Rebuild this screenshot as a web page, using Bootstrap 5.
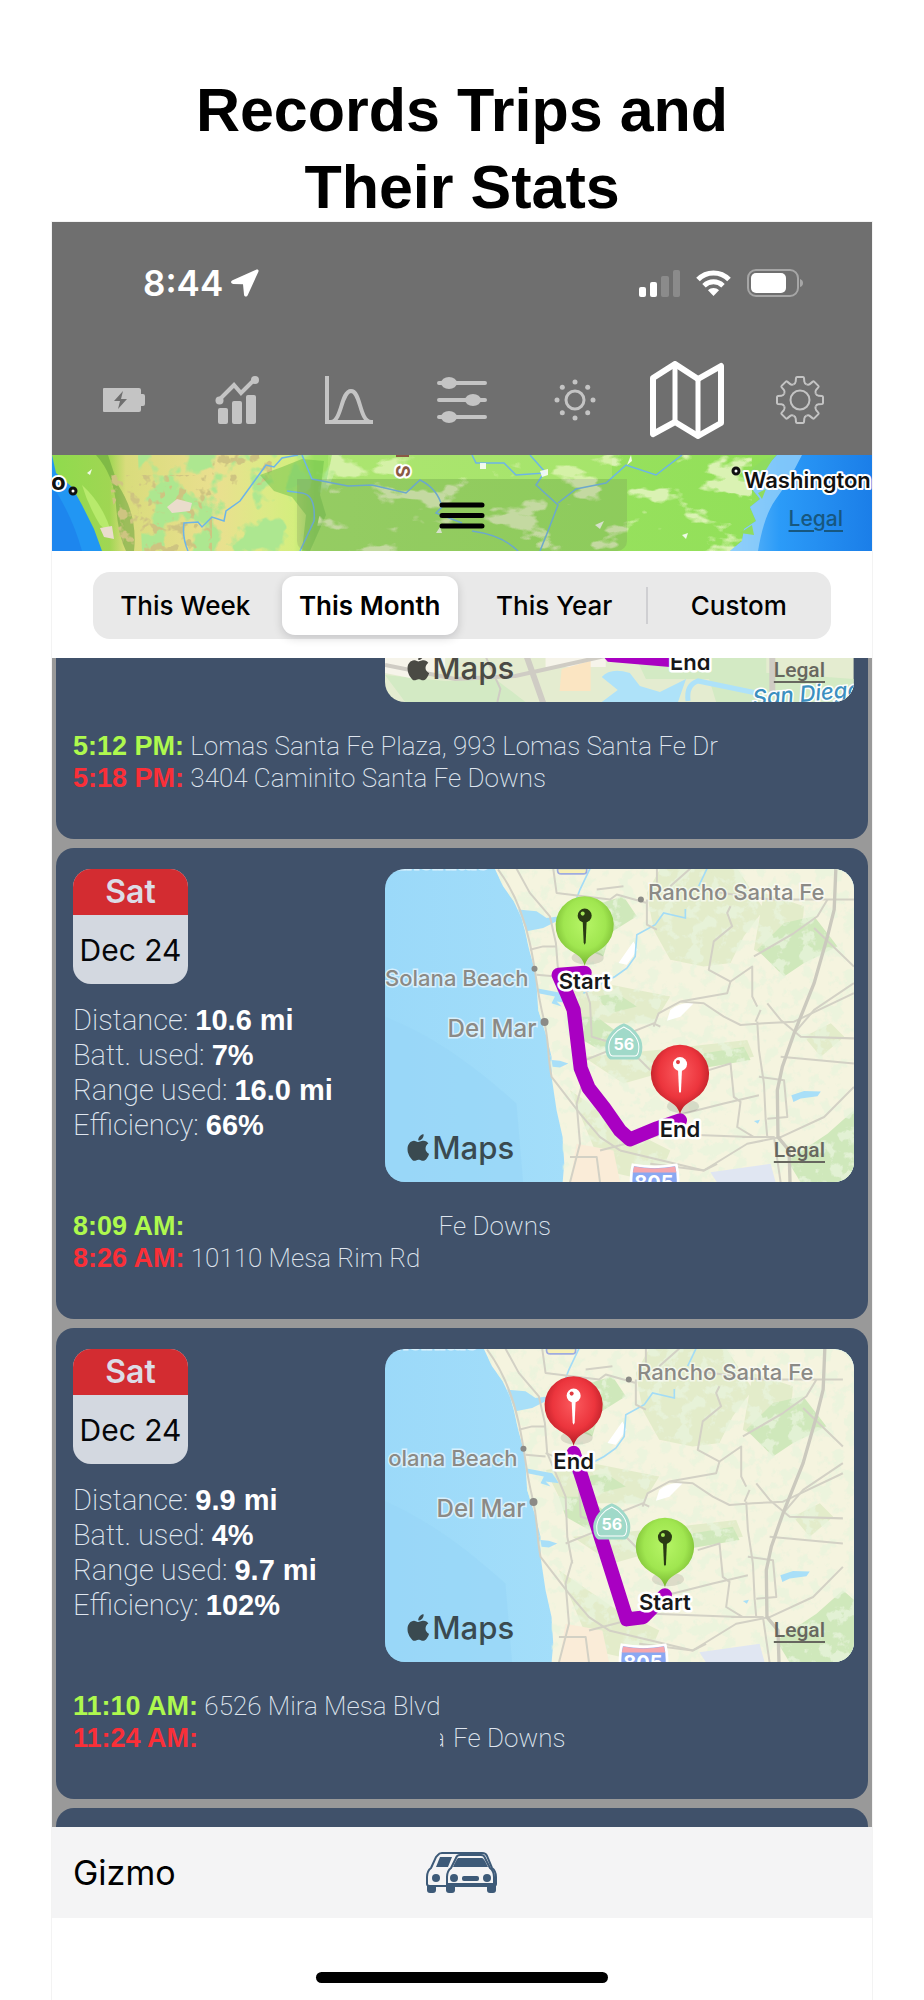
<!DOCTYPE html>
<html lang="en">
<head>
<meta charset="utf-8">
<meta name="viewport" content="width=device-width, initial-scale=1">
<title>Records Trips and Their Stats</title>
<link href="https://cdn.jsdelivr.net/npm/bootstrap@5.3.0/dist/css/bootstrap.min.css" rel="stylesheet">
<style>
  body { background: #fff; color: #000; font-family: "Liberation Sans", sans-serif; }
  .headline { font-size: 61px; line-height: 77px; padding-top: 72px; margin-bottom: -4px; }
  .phone { margin: 0 52px; box-shadow: 0 0 0 1px #f3f3f3; font-family: Inter, sans-serif; }
  .topbar { background: #6f6f6f; }
  .statusbar { height: 122px; padding: 0 68px 0 91px; color: #fff; font-size: 35px; font-weight: 600; }
  .tabs { height: 111px; padding: 0 16px; color: #c4c4c4; }
  .tabs a { color: inherit; }
  .tabs a.active { color: #fff; }
  .usmap { height: 96px; background: #93e25c; }
  .usmap svg.terrain { width: 100%; height: 96px; }
  .grip { width: 330px; height: 72px; border-radius: 0 0 10px 10px; background: rgba(110,120,90,.2); }
  .legal { font-size: 21px; line-height: 24px; font-weight: 500; right: 29px; bottom: 20px; color: #67675f; text-decoration-thickness: 2px; text-underline-offset: 4px; }
  .legal:hover { color: #333; }
  .usmap .legal { color: #17577f; }
  .rangebar { padding: 21px 41px 19px; }
  .segment { background: #e9e9e9; border-radius: 17px; padding: 4px 0; height: 67px; }
  .segment .btn { border: 0; border-radius: 13px !important; font-size: 26px; line-height: 32px; font-weight: 500; color: #000; padding: 14px 0 12px; margin: 0 4px !important; flex: 1 1 0; white-space: nowrap; }
  .segment .btn-check:checked + .btn { background: #fff; color: #000; font-weight: 600; box-shadow: 0 3px 10px rgba(0,0,20,.16); }
  .divide { width: 2px; margin: 11px -1px; background: #cfcfd2; }
  .trips { background: #999; padding: 0 4px; gap: 9px; }
  .trip { background: #40516a; border-radius: 18px; padding: 21px 14px 45px 17px; color: #dfe5ee; font-family: Roboto, sans-serif; font-weight: 200; }
  .trip-first { border-radius: 0 0 18px 18px; padding-top: 0; }
  .trip-next { border-radius: 18px 18px 0 0; height: 19px; padding: 0; }
  .cal { width: 115px; height: 115px; border-radius: 18px; background: #d3d8e0; color: #06070a; font-family: Inter, sans-serif; font-size: 30px; font-weight: 400; }
  .cal-day { background: #d32c31; color: #dcdce6; height: 46px; line-height: 46px; font-weight: 600; font-size: 32px; }
  .cal-date { line-height: 70px; white-space: nowrap; }
  .stats { font-size: 29px; line-height: 35px; margin-top: 19px; }
  .stats strong, .when { font-family: "Liberation Sans", sans-serif; font-weight: 700; }
  .stats strong { color: #fff; }
  .trip-map { width: 60%; border-radius: 20px; height: 313px; }
  .trip-first .trip-map { height: 44px; border-radius: 0 0 20px 20px; }
  .trip-map svg { width: 100%; height: 100%; }
  .places { font-size: 26px; line-height: 32px; margin-top: 28px; }
  .when { font-size: 27px; }
  .when-start { color: #aef94e; }
  .when-end { color: #fa2f38; }
  .hide-a { margin-left: 254px; }
  .hide-b { margin-left: 242px; width: 5px; direction: rtl; }
  .town { font-size: 22px; font-weight: 500; fill: #8b8a86; stroke: #fff; stroke-opacity: .6; stroke-width: 3px; paint-order: stroke; }
  .town-lg { font-size: 24px; }
  .pinname { font-size: 22px; font-weight: 600; fill: #17181a; stroke: #fff; stroke-width: 5px; stroke-linejoin: round; paint-order: stroke; }
  .brand { font-size: 31px; font-weight: 500; }
  .route { fill: none; stroke: #a900c2; stroke-width: 14px; stroke-linejoin: round; stroke-linecap: round; }
  .footbar { background: #f4f4f5; height: 91px; padding: 0 21px; font-size: 34px; font-weight: 400; }
  .home { height: 82px; padding-top: 54px; }
  .home span { width: 292px; height: 11px; border-radius: 6px; background: #000; }
  .trip-map text, .usmap text { font-family: Inter, sans-serif; }
</style>
</head>
<body>

<svg width="0" height="0" class="position-absolute" aria-hidden="true">
  <defs>
    <linearGradient id="sea" x1="0" x2="1"><stop offset="0" stop-color="#9bd9f9"/><stop offset="1" stop-color="#b1e6fb"/></linearGradient>
    <radialGradient id="pg" cx=".5" cy=".4" r=".6"><stop offset="0" stop-color="#b6f566"/><stop offset=".6" stop-color="#a0e650"/><stop offset="1" stop-color="#74b32e"/></radialGradient>
    <radialGradient id="pr" cx=".5" cy=".4" r=".6"><stop offset="0" stop-color="#fb5a5e"/><stop offset=".6" stop-color="#ec353d"/><stop offset="1" stop-color="#b01a23"/></radialGradient>
    <filter id="mottle" x="0" y="0" width="100%" height="100%">
      <feTurbulence type="fractalNoise" baseFrequency=".024" numOctaves="4" seed="8"/>
      <feColorMatrix values="0 0 0 0 .81  0 0 0 0 .9  0 0 0 0 .72  9 0 0 0 -4.6"/>
      <feComposite in2="SourceGraphic" operator="in"/>
    </filter>
    <filter id="hills" x="0" y="0" width="100%" height="100%">
      <feTurbulence type="fractalNoise" baseFrequency=".03" numOctaves="4" seed="3"/>
      <feColorMatrix values="0 0 0 0 .42  0 0 0 0 .8  0 0 0 0 .28  12 0 0 0 -6"/>
      <feComposite in2="SourceGraphic" operator="in"/>
    </filter>
    <filter id="rocks" x="0" y="0" width="100%" height="100%">
      <feTurbulence type="fractalNoise" baseFrequency=".09" numOctaves="3" seed="5"/>
      <feColorMatrix values="0 0 0 0 .62  0 0 0 0 .55  0 0 0 0 .22  9 0 0 0 -5"/>
      <feComposite in2="SourceGraphic" operator="in"/>
    </filter>
    <filter id="plains" x="0" y="0" width="100%" height="100%">
      <feTurbulence type="fractalNoise" baseFrequency=".02 .04" numOctaves="4" seed="12"/>
      <feColorMatrix values="0 0 0 0 .7  0 0 0 0 .89  0 0 0 0 .45  12 0 0 0 -7"/>
      <feComposite in2="SourceGraphic" operator="in"/>
    </filter>

    <!-- San Diego north county terrain, drawn at three units per pixel -->
    <g id="coast">
      <rect x="47" y="57" width="1460" height="939" fill="url(#sea)"/>
      <path d="M47 500C200 560 330 660 440 760L460 996H47Z" fill="#97d5f7" opacity=".6"/>
      <path d="M375 57L400 110 432 155 455 205 466 245 478 300 498 372 505 480 530 560 545 620 545 680 560 780 578 860 583 940 578 996H1507V57Z" fill="#f5f4df"/>
      <path d="M870 57H1100L1180 180 1120 260 1080 340 1000 350 900 330 850 240 830 130ZM1180 130L1300 170 1290 280 1200 330 1150 300ZM560 420L700 400 900 440 850 520 720 520 600 500ZM640 620L860 600 1130 570 1150 620 900 660 760 700ZM600 720L760 830 900 900 860 996 700 960ZM1300 560L1380 520 1420 560 1350 620Z" fill="#e3ecca"/>
      <path d="M660 170L760 140 800 200 720 250 700 320 650 300ZM1160 300L1240 220 1330 200 1400 290 1300 340 1240 380ZM680 440L740 430 800 470 720 490ZM600 500L680 500 760 560 690 600 620 560ZM940 620L1120 590 1140 630 960 660ZM1250 930L1370 850 1449 780 1507 830V996H1290Z" fill="#cfe8bb"/>
      <path d="M375 57L400 110 432 155 455 205 466 245 478 300 498 372 505 480 530 560 545 680 578 860 578 996H1507V57Z" filter="url(#mottle)" opacity=".75"/>
      <path d="M620 880L730 900 750 996H600Z" fill="#faecd8"/>
      <path d="M900 480Q930 455 970 460L930 500 890 512ZM745 340L790 275 802 300 770 345Z" fill="#fff"/>
      <path d="M1020 965L1200 940 1215 996H1040Z" fill="#e0e6f2"/>
      <g fill="#a8dff8">
        <path d="M445 180L500 185 530 205 570 200 560 215 520 235 470 245ZM545 630L570 632 595 640 570 652 548 650ZM1262 735L1300 722 1350 724 1340 738 1290 745 1268 755ZM1150 812L1168 808 1162 820ZM500 415L580 430 600 460 560 455 575 470 545 460 555 440 505 430Z"/>
      </g>
      <g fill="none" stroke="#a3dcf6" stroke-width="5"><path d="M1010 57L985 110M945 178L945 205 880 190 855 225 800 255 795 320 770 355 735 380 640 430M660 57L630 120 600 200"/></g>
      <g fill="none" stroke="#d3d1c5" stroke-width="6" stroke-linejoin="round">
        <path d="M385 60C430 120 460 190 480 280S500 420 520 500 530 600 545 680L630 790 690 860 750 900M440 57L480 130 540 200 558 280 565 370 620 500 625 620 640 700"/>
        <path d="M550 57L560 130 720 150 740 135 830 160M680 120L760 110M1080 170L1070 190 1085 230 1030 275 1015 360 1080 395 1145 350V440L1160 470M830 150V225L860 240M860 57V100M960 57L900 110M1020 125L1200 150 1449 150"/>
        <path d="M850 530L865 490 930 455 1000 460 1060 500 1110 525 1180 520 1270 515 1449 430M750 560L850 520 870 530M1080 395L1070 430 930 455M1160 515L1165 600 1180 700 1185 805 1190 860M1170 480L1155 515M1190 460L1230 510 1290 560 1449 565"/>
        <path d="M620 640L720 600 800 620 840 660M1015 660L1080 640 1090 740 1110 755 1100 830 1150 860M900 800L1060 760 1165 735M1165 680L1240 690 1250 800 1190 805M1230 620L1449 640M640 690L620 760 630 880 600 996M750 900L1000 960 1130 880 1230 860 1360 800 1449 710M690 900L880 850 1140 860M1115 860L1210 860 1230 996M1150 320L1270 250 1340 200 1370 150M1330 235L1449 350M1270 550L1330 480 1449 400"/>
        <path d="M560 370L640 400 660 460 665 560 800 600M480 300L520 290 560 290M500 375L560 380M600 920L680 920 690 996M840 940L1000 960 1040 940"/>
      </g>
      <g fill="none" stroke="#cbc9be" stroke-width="10"><path d="M1395 57L1390 180 1370 260 1330 400 1270 550 1235 650 1220 720 1222 860 1255 900 1258 996"/></g>
      <path d="M563 57H650V62Q650 73 640 73H574Q563 73 563 62Z" fill="#f6efb4" stroke="#9fabdf" stroke-width="5"/>
      <path d="M788 943Q852 955 918 943 926 975 922 1010H784Q780 975 788 943Z" fill="#8aa8f2" stroke="#fff" stroke-width="8"/>
      <path d="M792 948Q852 960 914 948L918 966H788Z" fill="#f5a7ae"/>
    </g>

    <g id="needle"><circle cx="0" cy="-10" r="7"/><path d="M-2 -5H2L1 17 0 19-1 17Z"/></g>
    <path id="balloon" d="M0 40C-2 32-7 29-14 25A29 29 0 1 1 14 25C7 29 2 32 0 40Z"/>
    <g id="pin-start"><ellipse cx="3" cy="32" rx="16" ry="7" fill="#000" opacity=".1"/><use href="#balloon" fill="url(#pg)"/><use href="#needle" fill="#2a3a14"/><circle cx="-2" cy="-12" r="2" fill="#a8e85a"/></g>
    <g id="pin-end"><ellipse cx="3" cy="32" rx="16" ry="7" fill="#000" opacity=".1"/><use href="#balloon" fill="url(#pr)"/><use href="#needle" fill="#fff"/><circle cx="-2" cy="-12" r="2" fill="#e03a40"/></g>
    <path id="sr" d="M0-18C8-15 17-6 17 4 17 10 15 15 12 15H-12C-15 15-17 10-17 4-17-6-8-15 0-18Z" fill="#a0d9c9" stroke="#a0d9c9" stroke-width="3"/>
    <path id="sr-line" d="M0-16C7-13 15-5 15 4 15 9 14 13 11 13H-11C-14 13-15 9-15 4-15-5-7-13 0-16Z" fill="none" stroke="#fff" stroke-width="1"/>
    <path id="apple" d="M11.182.008C11.148-.03 9.923.023 8.857 1.18c-1.066 1.156-.902 2.482-.878 2.516.024.034 1.52.087 2.475-1.258.955-1.345.762-2.391.728-2.43Zm3.314 11.733c-.048-.096-2.325-1.234-2.113-3.422.212-2.189 1.675-2.789 1.698-2.854.023-.065-.597-.79-1.254-1.157a3.692 3.692 0 0 0-1.563-.434c-.108-.003-.483-.095-1.254.116-.508.139-1.653.589-1.968.607-.316.018-1.256-.522-2.267-.665-.647-.125-1.333.131-1.824.328-.49.196-1.422.754-2.074 2.237-.652 1.482-.311 3.83-.067 4.56.244.729.625 1.924 1.273 2.796.576.984 1.34 1.667 1.659 1.899.319.232 1.219.386 1.843.067.502-.308 1.408-.485 1.766-.472.357.013 1.061.154 1.782.539.571.197 1.111.115 1.652-.105.541-.221 1.324-1.059 2.238-2.758.347-.79.505-1.217.473-1.282Z"/>
    <path id="tooth" d="M-6.5-15.7Q-4.5-16.5-4.3-18.5L-4-22Q-3.8-23-3-23H3Q3.8-23 4-22L4.3-18.5Q4.5-16.5 6.5-15.7"/>
  </defs>
</svg>

<h1 class="headline fw-bold text-center">Records Trips and<br>Their Stats</h1>

<main class="phone">
  <header class="topbar">
    <div class="statusbar d-flex align-items-center">
      <span>8:44</span>
      <svg class="ms-2" width="28" height="28" viewBox="0 0 28 28" fill="#fff"><path d="M25.5.6 1.5 11.2C-.7 12.2-.2 14.8 2 14.9L12 15.2 13 25.5C13.2 28 15.8 28.2 16.8 26L27.4 2.7C28 1.2 27 0 25.5.6Z"/></svg>
      <svg class="ms-auto" width="41" height="27" viewBox="0 0 41 27" fill="#fff"><rect y="17" width="7" height="10" rx="2"/><rect x="11" y="12" width="7" height="15" rx="2"/><rect x="22" y="6" width="8" height="21" rx="2" opacity=".2"/><rect x="34" width="7" height="27" rx="2" opacity=".2"/></svg>
      <svg class="mx-3" width="35" height="26" viewBox="0 0 35 26" fill="none" stroke="#fff" stroke-width="5"><path d="M2 9.5C10.5.7 24.5.7 33 9.5"/><path d="M8 15.7C13.5 10.5 21.5 10.5 27 15.7"/><path d="M17.5 26 12 20.2C15 17.3 20 17.3 23 20.2Z" fill="#fff" stroke="none"/></svg>
      <svg width="57" height="28" viewBox="0 0 57 28"><rect x="1" y="1" width="50" height="26" rx="8" fill="none" stroke="#a6a6a6" stroke-width="2"/><rect x="4" y="4" width="35" height="20" rx="5" fill="#fff"/><path d="M53 10Q56 11 56 14T53 18Z" fill="#a6a6a6"/></svg>
    </div>
    <nav class="tabs row row-cols-7 g-0 align-items-center text-center flex-nowrap" aria-label="Sections">
      <a class="col" href="#battery" aria-label="Battery"><svg width="48" height="48" viewBox="0 0 48 48" fill="currentColor"><path d="M4 12H39Q41 12 41 14V18H43Q45 18 45 20V28Q45 30 43 30H41V34Q41 36 39 36H4Q3 36 3 35V13Q3 12 4 12ZM23 15 14 25H20L18 33 27 23H21Z" fill-rule="evenodd"/></svg></a>
      <a class="col" href="#charts" aria-label="Charts"><svg width="48" height="48" viewBox="0 0 48 48" fill="currentColor"><rect x="5" y="32" width="10" height="16" rx="2"/><rect x="19" y="25" width="10" height="23" rx="2"/><rect x="33" y="19" width="10" height="29" rx="2"/><path d="M6 24 21 9 28 17 41 4" fill="none" stroke="currentColor" stroke-width="4"/><circle cx="6.5" cy="24.5" r="4"/><circle cx="42" cy="4" r="4"/></svg></a>
      <a class="col" href="#curve" aria-label="Distribution"><svg width="48" height="48" viewBox="0 0 48 48" fill="none" stroke="currentColor" stroke-width="4"><path d="M2 0V46H48M6 46C17 45 16 15 26 15S34 45 46 46"/></svg></a>
      <a class="col" href="#filters" aria-label="Filters"><svg width="50" height="48" viewBox="0 0 50 48" fill="currentColor"><path d="M2 7H48M2 24H48M2 41H48" stroke="currentColor" stroke-width="4" stroke-linecap="round"/><ellipse cx="12" cy="7" rx="8" ry="6"/><ellipse cx="36" cy="24" rx="8" ry="6"/><ellipse cx="12" cy="41" rx="8" ry="6"/></svg></a>
      <a class="col" href="#climate" aria-label="Climate"><svg width="48" height="48" viewBox="0 0 48 48" fill="currentColor"><circle cx="24" cy="24" r="9" fill="none" stroke="currentColor" stroke-width="3"/><circle cx="24" cy="6" r="2.5"/><circle cx="24" cy="42" r="2.5"/><circle cx="6" cy="24" r="2.5"/><circle cx="42" cy="24" r="2.5"/><circle cx="11.3" cy="11.3" r="2.5"/><circle cx="36.7" cy="11.3" r="2.5"/><circle cx="11.3" cy="36.7" r="2.5"/><circle cx="36.7" cy="36.7" r="2.5"/></svg></a>
      <a class="col active" href="#trips" aria-label="Trips" aria-current="page"><svg width="74" height="78" viewBox="0 0 74 78" fill="none" stroke="currentColor" stroke-linejoin="round" stroke-linecap="round"><path d="M3 17 25 3 48 18 71 5V62L48 75 25 61 3 73Z" stroke-width="6"/><path d="M25 3V61M48 18V75" stroke-width="5"/></svg></a>
      <a class="col" href="#settings" aria-label="Settings"><svg width="48" height="48" viewBox="-24 -24 48 48" fill="none" stroke="currentColor" stroke-width="2"><circle r="9.5"/><use href="#tooth"/><use href="#tooth" transform="rotate(45)"/><use href="#tooth" transform="rotate(90)"/><use href="#tooth" transform="rotate(135)"/><use href="#tooth" transform="rotate(180)"/><use href="#tooth" transform="rotate(225)"/><use href="#tooth" transform="rotate(270)"/><use href="#tooth" transform="rotate(315)"/></svg></a>
    </nav>
  </header>

  <section class="usmap position-relative overflow-hidden d-flex justify-content-center align-items-end">
    <svg class="terrain position-absolute top-0 start-0" viewBox="0 0 820 96" preserveAspectRatio="xMidYMid slice">
      <defs>
        <linearGradient id="atl" x1="0" x2="1"><stop offset="0" stop-color="#6fbef8"/><stop offset=".35" stop-color="#2b9bf8"/><stop offset="1" stop-color="#1b7ee8"/></linearGradient>
        <linearGradient id="mix"><stop offset="0" stop-color="#8fdb4d"/><stop offset=".07" stop-color="#a0d653"/><stop offset=".09" stop-color="#d9dc7c"/><stop offset=".2" stop-color="#eadf8f"/><stop offset=".26" stop-color="#dcea86"/><stop offset=".295" stop-color="#d4ee7e"/><stop offset=".32" stop-color="#9fe165"/><stop offset="1" stop-color="#8fe056"/></linearGradient>
      </defs>
      <rect width="820" height="96" fill="url(#mix)"/>
      <path d="M86 0H290L250 96H90Z" filter="url(#hills)"/>
      <path d="M44 0Q62 20 64 50T74 96H82Q86 60 66 30L56 0Z" fill="#5f9d3a" opacity=".5"/>
      <path d="M56 20H160V96H70ZM160 0H220V30H160Z" filter="url(#rocks)"/>
      <path d="M30 30Q52 50 60 80L48 70Q36 50 30 30Z" fill="#b8ea6c"/>
      <path d="M208 20 230 12 250 4 272 6 268 40 274 60 258 96H250L254 60 240 42 222 36Z" fill="#6cc048" opacity=".5"/>
      <path d="M280 0H700V96H260Z" filter="url(#plains)"/>
      <path d="M276 0H560V24H276Z" fill="#c9f08c" opacity=".3"/>
      <path d="M115 52 125 44 140 48 138 56 120 58ZM48 73 60 71 62 84 52 82Z" fill="#eadccc"/>
      <g fill="none" stroke="#6cb4e8" stroke-width="1.5"><path d="M136 96Q130 82 132 68L146 67 150 72 160 62 172 66 174 56 188 46 214 10 222 12 230 3 246 0M250 0 260 24 296 31 320 30 354 38 368 25Q386 34 390 52L384 58 410 68M248 96 262 66Q264 40 250 38L235 36M420 0 424 8 452 8 464 20 492 18 484 30 506 50 496 76 488 96M478 0 494 18M506 48 524 34 554 28 574 10 604 20 630 0M420 76Q450 80 466 96"/></g>
      <g fill="#fff" opacity=".85"><path d="M428 8H434V14H428ZM488 16 496 14 496 20 490 22ZM543 70 552 66 548 74ZM630 80 636 78 634 84ZM575 10 579 0 580 6ZM384 78 388 72 390 78ZM35 18 40 14 38 20Z"/></g>
      <path d="M0 0 4 18 20 32 30 50 42 74 50 96H0Z" fill="#2196f3"/>
      <path d="M0 30Q20 60 30 96H0Z" fill="#1d86ee"/>
      <path d="M725 0 712 14 702 12 700 34 708 44 698 52 704 66 692 74 690 86 678 96H820V0Z" fill="url(#atl)"/>
      <path d="M725 0 712 14 702 12 700 34 708 44 698 52 704 66 692 74 690 86 678 96H706Q712 60 724 44T750 0Z" fill="#9bd4fb" opacity=".75"/>
      <path d="M700 14 712 4 722 2 712 18ZM706 38 714 34 710 44ZM688 78 700 70 702 80Z" fill="#8fdc60"/>
      <g stroke="#fff" stroke-width="4" paint-order="stroke" stroke-linejoin="round">
        <text x="-1" y="35" font-size="24" font-weight="700" fill="#111">o</text>
        <text x="692" y="33" font-size="22" font-weight="600" fill="#111">Washington</text>
        <text transform="translate(344 10) rotate(90)" font-size="19" font-weight="700" fill="#8a5a44">S</text>
      </g>
      <path d="M344 0H357V2H344Z" fill="#8a5a44"/>
      <g fill="#fff" stroke="#111" stroke-width="3"><circle cx="21" cy="36" r="3"/><circle cx="684" cy="16" r="3"/></g>
    </svg>
    <button type="button" class="grip btn p-0 border-0 position-relative" aria-label="Resize map"><svg width="46" height="27" viewBox="0 0 46 27" stroke="#000" stroke-width="5" stroke-linecap="round"><path d="M3 3H43M3 13.5H43M3 24H43"/></svg></button>
    <a class="legal position-absolute" href="#legal">Legal</a>
  </section>

  <div class="rangebar">
    <div class="segment btn-group d-flex" role="group" aria-label="Range">
      <input type="radio" class="btn-check" name="range" id="r-week"><label class="btn" for="r-week">This Week</label>
      <input type="radio" class="btn-check" name="range" id="r-month" checked><label class="btn" for="r-month">This Month</label>
      <input type="radio" class="btn-check" name="range" id="r-year"><label class="btn" for="r-year">This Year</label>
      <span class="divide"></span>
      <input type="radio" class="btn-check" name="range" id="r-custom"><label class="btn" for="r-custom">Custom</label>
    </div>
  </div>

  <section class="trips d-flex flex-column" aria-label="Trips">
    <article class="trip trip-first">
      <div class="d-flex justify-content-end">
        <div class="trip-map position-relative overflow-hidden">
          <svg class="d-block" viewBox="0 269 467 44" preserveAspectRatio="xMidYMax slice">
            <rect y="269" width="467" height="44" fill="#e4ecd0"/>
            <path d="M0 286 60 292 110 290 140 313H20ZM320 280 400 285 467 290V313H330ZM250 269H380V290H260Z" fill="#d3eac4"/>
            <path d="M0 269H60V280L30 290 0 284ZM160 269H220V278H160Z" fill="#f6f4ea"/>
            <path d="M176 280 205 272V302H174Z" fill="#fbe5c2"/>
            <g fill="none" stroke="#cfccc4" stroke-width="4"><path d="M0 276 70 290 130 287 220 267"/><path d="M141 267 158 315M386 269V305" stroke-width="6"/><path d="M100 267 115 300 112 313" stroke-width="2"/></g>
            <path d="M216 288Q225 278 244 284L254 297 274 303 300 290 292 313H216L232 301Z" fill="#aee2f9"/>
            <path d="M302 312Q300 296 312 292L370 304" fill="none" stroke="#aee2f9" stroke-width="5"/>
            <path d="M217 267 284 267 284 278 222 273Z" fill="#a900c2"/>
            <text class="pinname" x="284" y="281">End</text>
            <text x="367" y="317" font-size="22" font-weight="500" font-style="italic" fill="#3c8fc0" stroke="#fff" stroke-width="3" paint-order="stroke" transform="rotate(-5 367 317)">San Diego</text>
            <use href="#apple" fill="#4a4a44" transform="translate(20 265) scale(1.65)"/>
            <text class="brand" x="47" y="290" fill="#4a4a44">Maps</text>
          </svg>
          <a class="legal position-absolute" href="#legal">Legal</a>
        </div>
      </div>
      <div class="places">
        <div><span class="when when-start">5:12 PM:</span> Lomas Santa Fe Plaza, 993 Lomas Santa Fe Dr</div>
        <div><span class="when when-end">5:18 PM:</span> 3404 Caminito Santa Fe Downs</div>
      </div>
    </article>

    <article class="trip">
      <div class="d-flex justify-content-between">
        <div>
          <div class="cal overflow-hidden text-center"><div class="cal-day">Sat</div><div class="cal-date">Dec 24</div></div>
          <div class="stats">
            <div>Distance: <strong>10.6 mi</strong></div>
            <div>Batt. used: <strong>7%</strong></div>
            <div>Range used: <strong>16.0 mi</strong></div>
            <div>Efficiency: <strong>66%</strong></div>
          </div>
        </div>
        <div class="trip-map position-relative overflow-hidden">
          <svg class="d-block" viewBox="0 0 467 313" preserveAspectRatio="xMidYMid slice">
            <use href="#coast" transform="scale(.33333) translate(-47 -57)"/>
            <text class="town" x="103" y="1" text-anchor="end">Encinitas</text>
            <text class="town" x="438" y="31" text-anchor="end">Rancho Santa Fe</text>
            <text class="town" x="143" y="117" text-anchor="end">Solana Beach</text>
            <text class="town town-lg" x="151" y="168" text-anchor="end">Del Mar</text>
            <g fill="#8b8a86"><circle cx="255" cy="31" r="3"/><circle cx="149" cy="100" r="3"/><circle cx="159" cy="153" r="4"/></g>
            <text x="268" y="320" font-size="20" font-weight="700" fill="#fff" text-anchor="middle">805</text>
            <path class="route" d="M199 104 173 106 181 124 188 141 195 199 203 219 218 238 234 261 244 270 271 259 294 251"/>
            <g transform="translate(238 174)"><use href="#sr"/><use href="#sr-line"/><text y="7" font-size="16" font-weight="700" fill="#fff" text-anchor="middle">56</text></g>
            <use href="#pin-start" x="199" y="57"/><use href="#pin-end" x="294" y="205"/>
            <text class="pinname" x="199" y="120" text-anchor="middle">Start</text>
            <text class="pinname" x="294" y="268" text-anchor="middle">End</text>
            <use href="#apple" fill="#3a4a50" transform="translate(20 265) scale(1.65)"/>
            <text class="brand" x="47" y="290" fill="#3a4a50">Maps</text>
          </svg>
          <a class="legal position-absolute" href="#legal">Legal</a>
        </div>
      </div>
      <div class="places">
        <div><span class="when when-start">8:09 AM:</span><span class="hide-a">Fe Downs</span></div>
        <div><span class="when when-end">8:26 AM:</span> 10110 Mesa Rim Rd</div>
      </div>
    </article>

    <article class="trip">
      <div class="d-flex justify-content-between">
        <div>
          <div class="cal overflow-hidden text-center"><div class="cal-day">Sat</div><div class="cal-date">Dec 24</div></div>
          <div class="stats">
            <div>Distance: <strong>9.9 mi</strong></div>
            <div>Batt. used: <strong>4%</strong></div>
            <div>Range used: <strong>9.7 mi</strong></div>
            <div>Efficiency: <strong>102%</strong></div>
          </div>
        </div>
        <div class="trip-map position-relative overflow-hidden">
          <svg class="d-block" viewBox="0 0 467 313" preserveAspectRatio="xMidYMid slice">
            <use href="#coast" transform="translate(-11 0) scale(.33333) translate(-47 -57)"/>
            <text class="town" x="92" y="1" text-anchor="end">Encinitas</text>
            <text class="town" x="427" y="31" text-anchor="end">Rancho Santa Fe</text>
            <text class="town" x="132" y="117" text-anchor="end">olana Beach</text>
            <text class="town town-lg" x="140" y="168" text-anchor="end">Del Mar</text>
            <g fill="#8b8a86"><circle cx="243" cy="31" r="3"/><circle cx="138" cy="100" r="3"/><circle cx="148" cy="153" r="4"/></g>
            <text x="257" y="320" font-size="20" font-weight="700" fill="#fff" text-anchor="middle">805</text>
            <path class="route" d="M188 104 196 128 241 270 257 268 279 246"/>
            <g transform="translate(226 174)"><use href="#sr"/><use href="#sr-line"/><text y="7" font-size="16" font-weight="700" fill="#fff" text-anchor="middle">56</text></g>
            <use href="#pin-end" x="188" y="57"/><use href="#pin-start" x="279" y="198"/>
            <text class="pinname" x="188" y="120" text-anchor="middle">End</text>
            <text class="pinname" x="279" y="261" text-anchor="middle">Start</text>
            <use href="#apple" fill="#3a4a50" transform="translate(20 265) scale(1.65)"/>
            <text class="brand" x="47" y="290" fill="#3a4a50">Maps</text>
          </svg>
          <a class="legal position-absolute" href="#legal">Legal</a>
        </div>
      </div>
      <div class="places">
        <div><span class="when when-start">11:10 AM:</span> 6526 Mira Mesa Blvd</div>
        <div class="d-flex"><span class="when when-end">11:24 AM:</span><span class="hide-b overflow-hidden">a</span><span class="ms-2">Fe Downs</span></div>
      </div>
    </article>

    <div class="trip trip-next"></div>
  </section>

  <footer>
    <div class="footbar position-relative d-flex align-items-center">
      <span>Gizmo</span>
      <a class="position-absolute top-50 start-50 translate-middle lh-1" href="#cars" aria-label="Vehicles"><svg width="72" height="42" viewBox="0 0 72 42">
        <g fill="#3d5a78"><rect x="1" y="29" width="9" height="12" rx="3"/><rect x="20" y="29" width="9" height="12" rx="3"/><rect x="61" y="29" width="9" height="12" rx="3"/></g>
        <path d="M12 3Q13 1 16 1H56Q60 1 61 4L66 16Q70 19 70 25V32Q70 34 67 34H4Q1 34 1 32V25Q1 19 5 16L10 5Z" fill="#f4f4f5" stroke="#3d5a78" stroke-width="2"/>
        <path d="M14 5H26L22 15H10Z" fill="#3d5a78"/><circle cx="10" cy="26" r="4" fill="#3d5a78"/>
        <path d="M30 6Q31 3 34 3H55Q58 3 59 6L64 16Q68 19 68 25V32H21V25Q21 19 25 16Z" fill="#f4f4f5" stroke="#3d5a78" stroke-width="2"/>
        <path d="M32 6H56Q58 6 62 15H27Q30 8 32 6Z" fill="#3d5a78"/><circle cx="28" cy="26" r="4" fill="#3d5a78"/><circle cx="61" cy="26" r="4" fill="#3d5a78"/><rect x="36" y="24" width="17" height="5" rx="2" fill="#3d5a78"/>
      </svg></a>
    </div>
    <div class="home d-flex justify-content-center"><span></span></div>
  </footer>
</main>

<script src="https://cdn.jsdelivr.net/npm/bootstrap@5.3.0/dist/js/bootstrap.bundle.min.js"></script>
</body>
</html>
